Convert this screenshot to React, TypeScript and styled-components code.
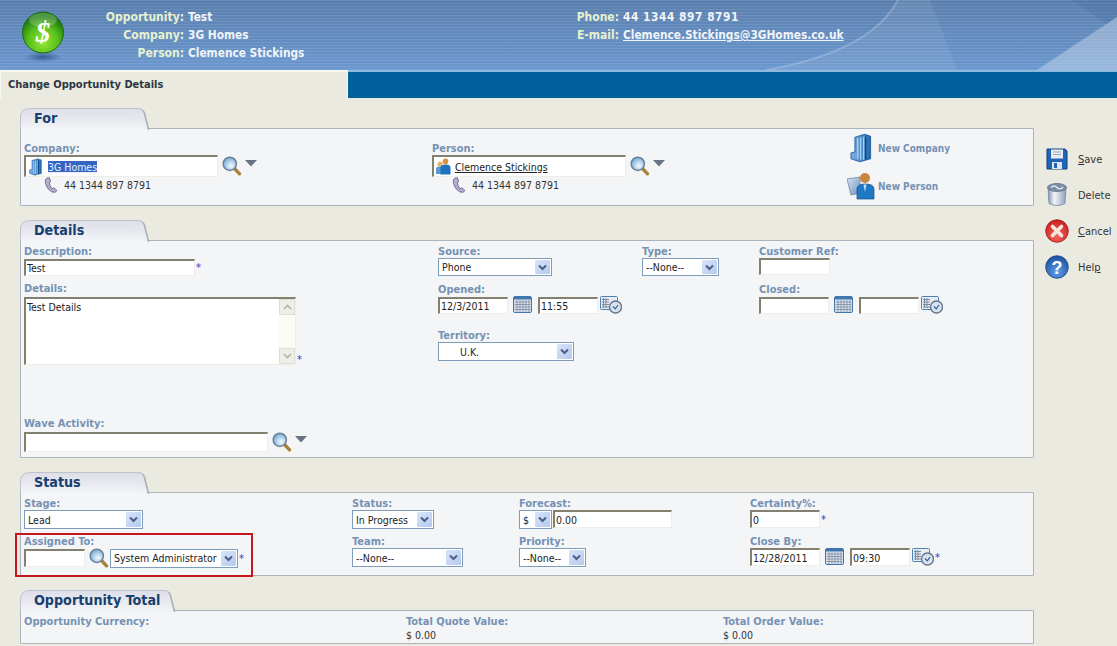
import { ReactNode } from 'react';
import styled, { createGlobalStyle } from 'styled-components';

const GlobalStyle = createGlobalStyle`
  html, body { margin: 0; padding: 0; background: #ebeae0; }
  * { box-sizing: border-box; }
  body { font-family: "DejaVu Sans Condensed", "DejaVu Sans", sans-serif; font-size: 11px; color: #222; }
`;

function App() {
  return (
    <Page>
      <GlobalStyle />
      <Header>
        <Swoosh viewBox="0 0 1117 70" preserveAspectRatio="none">
          <path d="M766 70 Q870 52 898 0 L930 0 L957 70 Z" fill="#fff" opacity="0.07" />
          <path d="M766 70 Q870 52 898 0" fill="none" stroke="#fff" strokeWidth="2" opacity="0.2" />
          <path d="M1037 70 L1117 17 L1117 70 Z" fill="#fff" opacity="0.3" />
          <path d="M1072 0 L1107 24 L1117 17 L1117 0 Z" fill="#3a5f8e" opacity="0.18" />
        </Swoosh>
        <CoinIcon />
        <InfoGrid $labelWidth={96} $width={471} $left={22}>
          <HeadLabel>Opportunity:</HeadLabel>
          <HeadValue>Test</HeadValue>
          <HeadLabel>Company:</HeadLabel>
          <HeadValue>3G Homes</HeadValue>
          <HeadLabel>Person:</HeadLabel>
          <HeadValue>Clemence Stickings</HeadValue>
        </InfoGrid>
        <InfoGrid $labelWidth={60} $width={400} $left={0}>
          <HeadLabel>Phone:</HeadLabel>
          <HeadValue $spaced>44 1344 897 8791</HeadValue>
          <HeadLabel>E-mail:</HeadLabel>
          <HeadValue><u>Clemence.Stickings@3GHomes.co.uk</u></HeadValue>
        </InfoGrid>
      </Header>

      <TabBar>
        <ActiveTab>Change Opportunity Details</ActiveTab>
        <TabFill />
      </TabBar>

      <Main>
        <Content>
          <Section title="For" tabWidth={129} height={78}>
            <ForGrid>
              <div>
                <Label>Company:</Label>
                <LookupRow>
                  <TextBox $width={194} $height={22} $inset={3} $gap={6}>
                    <BuildingIcon size={18} />
                    <Selected>3G Homes</Selected>
                  </TextBox>
                  <SearchIcon />
                  <Caret />
                </LookupRow>
                <PhoneRow><PhoneIcon />44 1344 897 8791</PhoneRow>
              </div>
              <div>
                <Label>Person:</Label>
                <LookupRow>
                  <TextBox $width={194} $height={22}>
                    <PeopleIcon />
                    <u>Clemence Stickings</u>
                  </TextBox>
                  <SearchIcon />
                  <Caret />
                </LookupRow>
                <PhoneRow><PhoneIcon />44 1344 897 8791</PhoneRow>
              </div>
              <NewLinks>
                <NewLink><IconSlot><BuildingIcon size={30} /></IconSlot>New Company</NewLink>
                <NewLink><IconSlot><NewPersonIcon /></IconSlot>New Person</NewLink>
              </NewLinks>
            </ForGrid>
          </Section>

          <Section title="Details" tabWidth={129} height={218}>
            <DetailsGrid>
              <DetailsLeft>
                <DescriptionLabel>Description:</DescriptionLabel>
                <LookupRow>
                  <TextBox $width={171} $height={17}>Test</TextBox>
                  <Star />
                </LookupRow>
                <NotesLabel>Details:</NotesLabel>
                <LookupRow $end>
                  <TextArea>
                    Test Details
                    <ScrollTrack>
                      <ScrollButton>
                        <svg width="9" height="6" viewBox="0 0 9 6"><path d="M1 5 L4.5 1.5 L8 5" fill="none" stroke="#b4b4a8" strokeWidth="1.6" /></svg>
                      </ScrollButton>
                      <ScrollButton>
                        <svg width="9" height="6" viewBox="0 0 9 6"><path d="M1 1 L4.5 4.5 L8 1" fill="none" stroke="#b4b4a8" strokeWidth="1.6" /></svg>
                      </ScrollButton>
                    </ScrollTrack>
                  </TextArea>
                  <Star />
                </LookupRow>
                <WaveField>
                  <WaveLabel>Wave Activity:</WaveLabel>
                  <LookupRow>
                    <TextBox $width={244} $height={20} />
                    <SearchIcon />
                    <Caret />
                  </LookupRow>
                </WaveField>
              </DetailsLeft>
              <DetailsRight>
                <div>
                  <Label>Source:</Label>
                  <Select $width={114} $height={18}>Phone</Select>
                </div>
                <div>
                  <Label>Type:</Label>
                  <Select $width={77} $height={18}>--None--</Select>
                </div>
                <div>
                  <Label>Customer Ref:</Label>
                  <TextBox $width={71} $height={17} />
                </div>
                <WideCell>
                  <Label>Opened:</Label>
                  <DateRow>
                    <TextBox $width={70} $height={17}>12/3/2011</TextBox>
                    <CalendarIcon />
                    <TextBox $width={60} $height={17}>11:55</TextBox>
                    <ClockIcon />
                  </DateRow>
                </WideCell>
                <div>
                  <Label>Closed:</Label>
                  <DateRow>
                    <TextBox $width={70} $height={17} />
                    <CalendarIcon />
                    <TextBox $width={60} $height={17} />
                    <ClockIcon />
                  </DateRow>
                </div>
                <TerritoryCell>
                  <Label>Territory:</Label>
                  <Select $width={136} $height={19} $indent={18}>U.K.</Select>
                </TerritoryCell>
              </DetailsRight>
            </DetailsGrid>
          </Section>

          <Section title="Status" tabWidth={129} height={84}>
            <StatusGrid>
              <div>
                <Label>Stage:</Label>
                <Select $width={119} $height={19}>Lead</Select>
              </div>
              <div>
                <Label>Status:</Label>
                <Select $width={82} $height={19}>In Progress</Select>
              </div>
              <div>
                <Label>Forecast:</Label>
                <ControlRow>
                  <Select $width={33} $height={19}>$</Select>
                  <TextBox $width={119} $height={18}>0.00</TextBox>
                </ControlRow>
              </div>
              <div>
                <Label>Certainty%:</Label>
                <LookupRow>
                  <TextBox $width={70} $height={18}>0</TextBox>
                  <Star />
                </LookupRow>
              </div>
              <AssignedCell>
                <Highlight />
                <Label>Assigned To:</Label>
                <AssignedRow>
                  <TextBox $width={61} $height={18} />
                  <SearchSlot><SearchIcon /></SearchSlot>
                  <Select $width={128} $height={19}>System Administrator</Select>
                  <Star $offset={1} />
                </AssignedRow>
              </AssignedCell>
              <div>
                <Label>Team:</Label>
                <Select $width={111} $height={19}>--None--</Select>
              </div>
              <div>
                <Label>Priority:</Label>
                <Select $width={67} $height={19}>--None--</Select>
              </div>
              <div>
                <Label>Close By:</Label>
                <DateRow>
                  <TextBox $width={70} $height={18}>12/28/2011</TextBox>
                  <CalendarIcon />
                  <TextBox $width={60} $height={18}>09:30</TextBox>
                  <ClockIcon />
                  <Star $offset={1} />
                </DateRow>
              </div>
            </StatusGrid>
          </Section>

          <Section title="Opportunity Total" tabWidth={155} height={34}>
            <TotalGrid>
              <Label>Opportunity Currency:</Label>
              <div>
                <Label>Total Quote Value:</Label>
                <Amount>$ 0.00</Amount>
              </div>
              <div>
                <Label>Total Order Value:</Label>
                <Amount>$ 0.00</Amount>
              </div>
            </TotalGrid>
          </Section>
        </Content>

        <Actions>
          <Action><ActionIcon><FloppyIcon /></ActionIcon><span><u>S</u>ave</span></Action>
          <Action><ActionIcon><TrashIcon /></ActionIcon><span>Delete</span></Action>
          <Action><ActionIcon><CancelIcon /></ActionIcon><span><u>C</u>ancel</span></Action>
          <Action><ActionIcon><HelpIcon /></ActionIcon><span>Hel<u>p</u></span></Action>
        </Actions>
      </Main>
    </Page>
  );
}

export default App;

function Section({ title, tabWidth, height, children }: { title: string; tabWidth: number; height: number; children: ReactNode }) {
  return (
    <SectionWrap>
      <SectionTab $width={tabWidth}>{title}</SectionTab>
      <Panel $height={height}>{children}</Panel>
    </SectionWrap>
  );
}

function Select({ $width, $height, $indent, children }: { $width: number; $height: number; $indent?: number; children: ReactNode }) {
  return (
    <SelectBox $width={$width} $height={$height} $indent={$indent}>
      <SelectText>{children}</SelectText>
      <SelectArrow>
        <svg width="9" height="7" viewBox="0 0 9 7">
          <path d="M1 1.5 L4.5 5 L8 1.5" fill="none" stroke="#4a5f88" strokeWidth="2" />
        </svg>
      </SelectArrow>
    </SelectBox>
  );
}

function Star({ $offset = -3 }: { $offset?: number }) {
  return <StarMark $offset={$offset}>*</StarMark>;
}

function Caret() {
  return (
    <CaretSvg width="12" height="7" viewBox="0 0 12 7">
      <path d="M0 0 H12 L6 6.5 Z" fill="#6a7480" />
    </CaretSvg>
  );
}

function CoinIcon() {
  return (
    <CoinSvg width="46" height="52" viewBox="0 0 46 52">
      <defs>
        <radialGradient id="coinFill" cx="0.5" cy="0.72" r="0.62">
          <stop offset="0" stopColor="#9be83a" />
          <stop offset="0.6" stopColor="#55bf1b" />
          <stop offset="1" stopColor="#1f7a12" />
        </radialGradient>
        <radialGradient id="coinShade">
          <stop offset="0" stopColor="#2a4f85" stopOpacity="0.8" />
          <stop offset="1" stopColor="#2a4f85" stopOpacity="0" />
        </radialGradient>
      </defs>
      <ellipse cx="23" cy="46" rx="19" ry="5" fill="url(#coinShade)" />
      <circle cx="23" cy="21.5" r="20.5" fill="url(#coinFill)" stroke="#1c6a18" strokeWidth="1" />
      <ellipse cx="23" cy="9" rx="14" ry="7" fill="#fff" opacity="0.22" />
      <text x="23" y="31" textAnchor="middle" fontFamily="Liberation Serif, serif" fontWeight="bold" fontStyle="italic" fontSize="29" fill="#fff">$</text>
    </CoinSvg>
  );
}

function SearchIcon() {
  return (
    <IconSvg width="20" height="20" viewBox="0 0 20 20">
      <defs>
        <radialGradient id="lens" cx="0.6" cy="0.65" r="0.7">
          <stop offset="0" stopColor="#f4fbff" />
          <stop offset="1" stopColor="#6aa6d8" />
        </radialGradient>
      </defs>
      <path d="M11.5 11.5 L17.5 17.8" stroke="#a8803a" strokeWidth="3.4" strokeLinecap="round" />
      <circle cx="7.8" cy="7.8" r="6.6" fill="url(#lens)" stroke="#6d8294" strokeWidth="1.5" />
    </IconSvg>
  );
}

function BuildingIcon({ size }: { size: number }) {
  return (
    <IconSvg width={size * 0.72} height={size} viewBox="0 0 22 30">
      <defs>
        <linearGradient id="tower" x1="0" x2="1" y1="0" y2="0">
          <stop offset="0" stopColor="#7fb4e6" />
          <stop offset="1" stopColor="#1f69b4" />
        </linearGradient>
      </defs>
      <path d="M5 4 L15 1 L21 3 V26 L10 29 L1 26 V20 L5 19 Z" fill="url(#tower)" stroke="#15508e" strokeWidth="0.8" />
      <path d="M8 5 V26 M11 4.5 V27 M14 3.5 V27" stroke="#cfe4f7" strokeWidth="1" />
      <path d="M16 3.5 V27" stroke="#0f4a86" strokeWidth="1.6" />
    </IconSvg>
  );
}

function PeopleIcon() {
  return (
    <IconSvg width="16" height="17" viewBox="0 0 16 17">
      <circle cx="5" cy="6" r="2.6" fill="#e8b070" />
      <path d="M1 16 V11 Q1 8.6 5 8.6 Q8 8.6 8 11 V16 Z" fill="#5a9ad8" />
      <circle cx="10.5" cy="3.4" r="2.8" fill="#d99242" />
      <path d="M5.5 16.5 V9.5 Q5.5 6.4 10.5 6.4 Q15.5 6.4 15.5 9.5 V16.5 Z" fill="#1f73bd" />
    </IconSvg>
  );
}

function NewPersonIcon() {
  return (
    <IconSvg width="28" height="28" viewBox="0 0 28 28">
      <defs>
        <linearGradient id="screen" x1="0" x2="1" y1="0" y2="1">
          <stop offset="0" stopColor="#dce4ee" />
          <stop offset="1" stopColor="#6e93c4" />
        </linearGradient>
      </defs>
      <path d="M0 7 L13 5 V21 L4 23 Z" fill="url(#screen)" stroke="#71859c" strokeWidth="0.8" />
      <circle cx="18" cy="6" r="5" fill="#c9853c" />
      <path d="M10 27 V17 Q10 12 18 12 Q27 12 27 17 V27 Z" fill="#1e78c4" stroke="#114e88" strokeWidth="0.7" />
      <path d="M16.5 12.5 L18 20 L19.5 12.5 Z" fill="#bfe2fa" />
    </IconSvg>
  );
}

function PhoneIcon() {
  return (
    <PhoneSvg width="14" height="16" viewBox="0 0 14 16">
      <path d="M3 1 Q0.5 2 1.5 6.5 Q3 12.5 8 15 Q12 16 13 13.5 L9.8 10.8 L8 11.8 Q5.6 9 5.2 5.6 L6.6 4.6 L5.4 0.8 Z" fill="#b7aed0" stroke="#6a6490" strokeWidth="0.9" />
    </PhoneSvg>
  );
}

function CalendarIcon() {
  return (
    <CalendarSvg width="19" height="18" viewBox="0 0 19 18">
      <rect x="0.5" y="0.5" width="18" height="16" rx="1.5" fill="#dfe7f2" stroke="#3f76ab" />
      <rect x="1" y="1" width="17" height="2.5" fill="#3f76ab" />
      <path d="M1.5 6 H17.5 M1.5 8.5 H17.5 M1.5 11 H17.5 M1.5 13.5 H17.5 M4 4 V16 M7 4 V16 M10 4 V16 M13 4 V16 M16 4 V16" stroke="#8a97ab" strokeWidth="1" />
    </CalendarSvg>
  );
}

function ClockIcon() {
  return (
    <ClockSvg width="22" height="18" viewBox="0 0 22 18">
      <rect x="0.5" y="0.5" width="17" height="13" rx="1" fill="#e6edf5" stroke="#4f82b3" />
      <path d="M2 3.5 H9 M2 6 H9 M2 8.5 H9 M2 11 H9 M3.5 2 V12 M6 2 V12" stroke="#7c8ba0" strokeWidth="1" />
      <circle cx="15.5" cy="11" r="6" fill="#d7e2ee" stroke="#66788e" strokeWidth="1.4" />
      <path d="M13 10.5 L15.3 12.8 L18 9" fill="none" stroke="#2d5f99" strokeWidth="1.2" />
    </ClockSvg>
  );
}

function FloppyIcon() {
  return (
    <svg width="22" height="22" viewBox="0 0 22 22">
      <path d="M1 1 H19 L21 3 V21 H1 Z" fill="#1f64b5" stroke="#123f7c" strokeWidth="1" />
      <rect x="5" y="1.5" width="12" height="9" fill="#e9edf3" />
      <path d="M7 4 H15 M7 6.5 H15" stroke="#9aa8ba" strokeWidth="1" />
      <rect x="6" y="14" width="10" height="7" fill="#dfe6ee" />
      <rect x="8" y="15" width="3" height="5" fill="#1f64b5" />
    </svg>
  );
}

function TrashIcon() {
  return (
    <svg width="22" height="26" viewBox="0 0 22 25">
      <defs>
        <linearGradient id="can" x1="0" x2="1" y1="0" y2="0">
          <stop offset="0" stopColor="#7d93ac" />
          <stop offset="0.35" stopColor="#f3f6fa" />
          <stop offset="1" stopColor="#8da1b9" />
        </linearGradient>
      </defs>
      <path d="M2 5 L3 21 Q11 25 19 21 L20 5 Z" fill="url(#can)" stroke="#74879d" strokeWidth="0.8" />
      <ellipse cx="11" cy="5" rx="9.5" ry="4" fill="#7a8ea6" stroke="#5f7289" strokeWidth="0.8" />
      <path d="M5 5 Q8 2 11 5 T17 4.5" fill="none" stroke="#e4eaf1" strokeWidth="1.4" />
    </svg>
  );
}

function CancelIcon() {
  return (
    <svg width="24" height="24" viewBox="0 0 24 24">
      <defs>
        <radialGradient id="redBall" cx="0.5" cy="0.7" r="0.7">
          <stop offset="0" stopColor="#f46a5e" />
          <stop offset="1" stopColor="#c81c20" />
        </radialGradient>
      </defs>
      <circle cx="12" cy="12" r="11.3" fill="url(#redBall)" stroke="#a01a1c" strokeWidth="0.8" />
      <path d="M7.5 7.5 L16.5 16.5 M16.5 7.5 L7.5 16.5" stroke="#f7e6dc" strokeWidth="3.6" strokeLinecap="round" />
    </svg>
  );
}

function HelpIcon() {
  return (
    <svg width="24" height="24" viewBox="0 0 24 24">
      <defs>
        <radialGradient id="blueBall" cx="0.5" cy="0.72" r="0.72">
          <stop offset="0" stopColor="#5f9ee6" />
          <stop offset="1" stopColor="#1a4f9f" />
        </radialGradient>
      </defs>
      <circle cx="12" cy="12" r="11.3" fill="url(#blueBall)" stroke="#1a4587" strokeWidth="0.8" />
      <text x="12" y="18.5" textAnchor="middle" fontFamily="Liberation Sans, sans-serif" fontWeight="bold" fontSize="18" fill="#fff">?</text>
    </svg>
  );
}

const Page = styled.div`
  width: 1117px;
  height: 646px;
  overflow: hidden;
  display: flex;
  flex-direction: column;
  background: #ebeae0;
`;

const Header = styled.header`
  position: relative;
  height: 70px;
  flex: none;
  display: flex;
  padding: 8px 0 0 20px;
  background:
    repeating-linear-gradient(0deg, rgba(255, 255, 255, 0.09) 0 1px, transparent 1px 3px),
    linear-gradient(#5a7fae, #6b98cf);
`;

const Swoosh = styled.svg`
  position: absolute;
  inset: 0;
  width: 100%;
  height: 100%;
`;

const CoinSvg = styled.svg`
  flex: none;
  margin-top: 3px;
`;

const InfoGrid = styled.div<{ $labelWidth: number; $width: number; $left: number }>`
  position: relative;
  display: grid;
  grid-template-columns: ${(p) => p.$labelWidth}px auto;
  grid-auto-rows: 18px;
  column-gap: 4px;
  align-items: center;
  align-content: start;
  margin-left: ${(p) => p.$left}px;
  width: ${(p) => p.$width}px;
  flex: none;
  font-size: 12px;
  font-weight: 700;
`;

const HeadLabel = styled.div`
  text-align: right;
  color: #e6f2cf;
  white-space: nowrap;
`;

const HeadValue = styled.div<{ $spaced?: boolean }>`
  color: #f0f4f8;
  font-size: 11.8px;
  letter-spacing: ${(p) => (p.$spaced ? '0.55px' : '0')};
  white-space: nowrap;
`;

const TabBar = styled.div`
  height: 29px;
  flex: none;
  display: flex;
  background: #ebeae0;
`;

const ActiveTab = styled.div`
  width: 348px;
  padding: 6px 0 0 7px;
  font-weight: 700;
  color: #2b3640;
  border-top: 2px solid #f7f7f2;
  border-left: 1px solid #f7f7f2;
  border-right: 1px solid #f7f7f2;
  border-radius: 3px 3px 0 0;
`;

const TabFill = styled.div`
  flex: 1;
  height: 28px;
  background: #00609c;
  border-top: 2px solid #8fb8de;
`;

const Main = styled.div`
  flex: 1;
  display: flex;
`;

const Content = styled.div`
  width: 1034px;
  flex: none;
  padding: 9px 0 0 20px;
  display: flex;
  flex-direction: column;
  gap: 14px;
`;

const SectionWrap = styled.section`
  display: flex;
  flex-direction: column;
`;

const SectionTab = styled.div<{ $width: number }>`
  position: relative;
  width: ${(p) => p.$width - 8}px;
  height: 21px;
  margin-bottom: -1px;
  padding: 1px 0 0 13px;
  font-size: 14.2px;
  font-weight: 700;
  white-space: nowrap;
  color: #17406e;
  background: linear-gradient(#dddee8, #f3f4f7);
  border: 1px solid #bcc3ca;
  border-bottom: none;
  border-right: none;
  border-radius: 9px 0 0 0;
  z-index: 1;
  &::after {
    content: '';
    position: absolute;
    z-index: -1;
    top: -1px;
    right: -6px;
    width: 12px;
    height: 21px;
    background: linear-gradient(#dddee8, #f3f4f7);
    border-top: 1px solid #bcc3ca;
    border-right: 2px solid #aab2ba;
    border-radius: 0 6px 0 0;
    transform: skewX(14deg);
  }
`;

const Panel = styled.div<{ $height: number }>`
  height: ${(p) => p.$height}px;
  padding: 0 0 0 3px;
  background: #f4f5f7;
  border: 1px solid #a9b4bc;
  border-radius: 0 0 1px 1px;
`;

const Label = styled.div`
  height: 14px;
  line-height: 16px;
  font-weight: 700;
  color: #7592b4;
  white-space: nowrap;
`;

const DescriptionLabel = styled(Label)`
  margin-bottom: 1px;
`;

const NotesLabel = styled(Label)`
  margin-top: 5px;
  margin-bottom: 2px;
`;

const WaveLabel = styled(Label)`
  margin-top: -2px;
  margin-bottom: 2px;
`;

const TextBox = styled.div<{ $width: number; $height: number; $inset?: number; $gap?: number }>`
  width: ${(p) => p.$width}px;
  height: ${(p) => p.$height}px;
  flex: none;
  display: flex;
  align-items: center;
  gap: ${(p) => p.$gap ?? 4}px;
  padding-left: ${(p) => p.$inset ?? 1}px;
  background: #fff;
  color: #222;
  font-size: 10.5px;
  white-space: nowrap;
  border-style: solid;
  border-width: 2px 1px 1px 2px;
  border-color: #84806f #efeee6 #efeee6 #84806f;
`;

const Selected = styled.span`
  background: #3366c4;
  color: #e6eeff;
  text-decoration: underline;
`;

const TextArea = styled.div`
  position: relative;
  width: 272px;
  height: 68px;
  padding: 2px 0 0 1px;
  font-size: 10.5px;
  background: #fff;
  border-style: solid;
  border-width: 2px 1px 1px 2px;
  border-color: #84806f #efeee6 #efeee6 #84806f;
`;

const ScrollTrack = styled.div`
  position: absolute;
  top: 0;
  right: 0;
  bottom: 0;
  width: 16px;
  display: flex;
  flex-direction: column;
  justify-content: space-between;
  background: #fbfbf6;
`;

const ScrollButton = styled.div`
  height: 16px;
  display: flex;
  align-items: center;
  justify-content: center;
  background: #eeeee6;
  border: 1px solid #dededa;
`;

const StarMark = styled.span<{ $offset: number }>`
  margin-left: ${(p) => p.$offset}px;
  color: #3333cc;
  font-size: 11px;
  line-height: 11px;
`;

const SelectBox = styled.div<{ $width: number; $height: number; $indent?: number }>`
  width: ${(p) => p.$width}px;
  height: ${(p) => p.$height}px;
  flex: none;
  display: flex;
  align-items: center;
  justify-content: space-between;
  padding: 1px 1px 1px ${(p) => 3 + (p.$indent ?? 0)}px;
  background: #fff;
  font-size: 10.5px;
  border: 1px solid #7f9db9;
`;

const SelectText = styled.span`
  white-space: nowrap;
  overflow: hidden;
`;

const SelectArrow = styled.span`
  width: 15px;
  height: 100%;
  flex: none;
  display: flex;
  align-items: center;
  justify-content: center;
  background: linear-gradient(135deg, #d9e4fb, #b5c9ef);
  border-radius: 1px;
`;

const IconSvg = styled.svg`
  flex: none;
`;

const CalendarSvg = styled.svg`
  flex: none;
  margin: 0 6px 0 5px;
`;

const ClockSvg = styled.svg`
  flex: none;
  margin-left: 2px;
`;

const CaretSvg = styled.svg`
  flex: none;
  margin: 0 0 6px -1px;
`;

const PhoneSvg = styled.svg`
  flex: none;
`;

const ForGrid = styled.div`
  display: grid;
  grid-template-columns: 408px 416px 1fr;
  padding-top: 12px;
`;

const LookupRow = styled.div<{ $end?: boolean }>`
  display: flex;
  align-items: ${(p) => (p.$end ? 'flex-end' : 'center')};
  gap: 4px;
`;

const PhoneRow = styled.div`
  display: flex;
  align-items: center;
  gap: 6px;
  height: 16px;
  padding-left: 20px;
  font-size: 10.5px;
  color: #333;
`;

const NewLinks = styled.div`
  display: flex;
  flex-direction: column;
  gap: 8px;
  margin-top: -8px;
`;

const NewLink = styled.div`
  display: flex;
  align-items: center;
  height: 30px;
  font-size: 10px;
  font-weight: 700;
  color: #7592b4;
`;

const IconSlot = styled.span`
  width: 34px;
  display: flex;
  justify-content: center;
  margin-left: -4px;
`;

const DetailsGrid = styled.div`
  display: grid;
  grid-template-columns: 414px 1fr;
  height: 216px;
  padding: 3px 0 5px;
`;

const DetailsLeft = styled.div`
  display: flex;
  flex-direction: column;
  min-height: 0;
`;

const WaveField = styled.div`
  margin-top: auto;
`;

const DetailsRight = styled.div`
  display: grid;
  grid-template-columns: 204px 117px 1fr;
  grid-auto-rows: min-content;
  row-gap: 6px;
`;

const WideCell = styled.div`
  grid-column: 1 / span 2;
`;

const TerritoryCell = styled.div`
  grid-column: 1 / span 3;
  margin-top: 8px;
`;

const DateRow = styled.div`
  display: flex;
  align-items: center;
`;

const ControlRow = styled.div`
  display: flex;
  gap: 1px;
`;

const StatusGrid = styled.div`
  display: grid;
  grid-template-columns: 328px 167px 231px 1fr;
  row-gap: 5px;
  padding-top: 3px;
`;

const AssignedCell = styled.div`
  position: relative;
`;

const AssignedRow = styled.div`
  display: flex;
  align-items: center;
`;

const SearchSlot = styled.span`
  display: flex;
  margin: 0 1px 0 4px;
`;

const Highlight = styled.div`
  position: absolute;
  left: -9px;
  top: -1px;
  width: 238px;
  height: 44px;
  border: 2px solid #c4161c;
  pointer-events: none;
`;

const TotalGrid = styled.div`
  display: grid;
  grid-template-columns: 382px 317px 1fr;
  padding-top: 3px;
`;

const Amount = styled.div`
  margin-top: 1px;
  line-height: 12px;
  font-size: 10.5px;
  color: #333;
`;

const Actions = styled.aside`
  flex: 1;
  padding: 42px 0 0 11px;
  display: flex;
  flex-direction: column;
`;

const Action = styled.div`
  height: 36px;
  display: flex;
  align-items: center;
  gap: 9px;
  color: #333;
`;

const ActionIcon = styled.span`
  width: 24px;
  display: flex;
  justify-content: center;
`;
